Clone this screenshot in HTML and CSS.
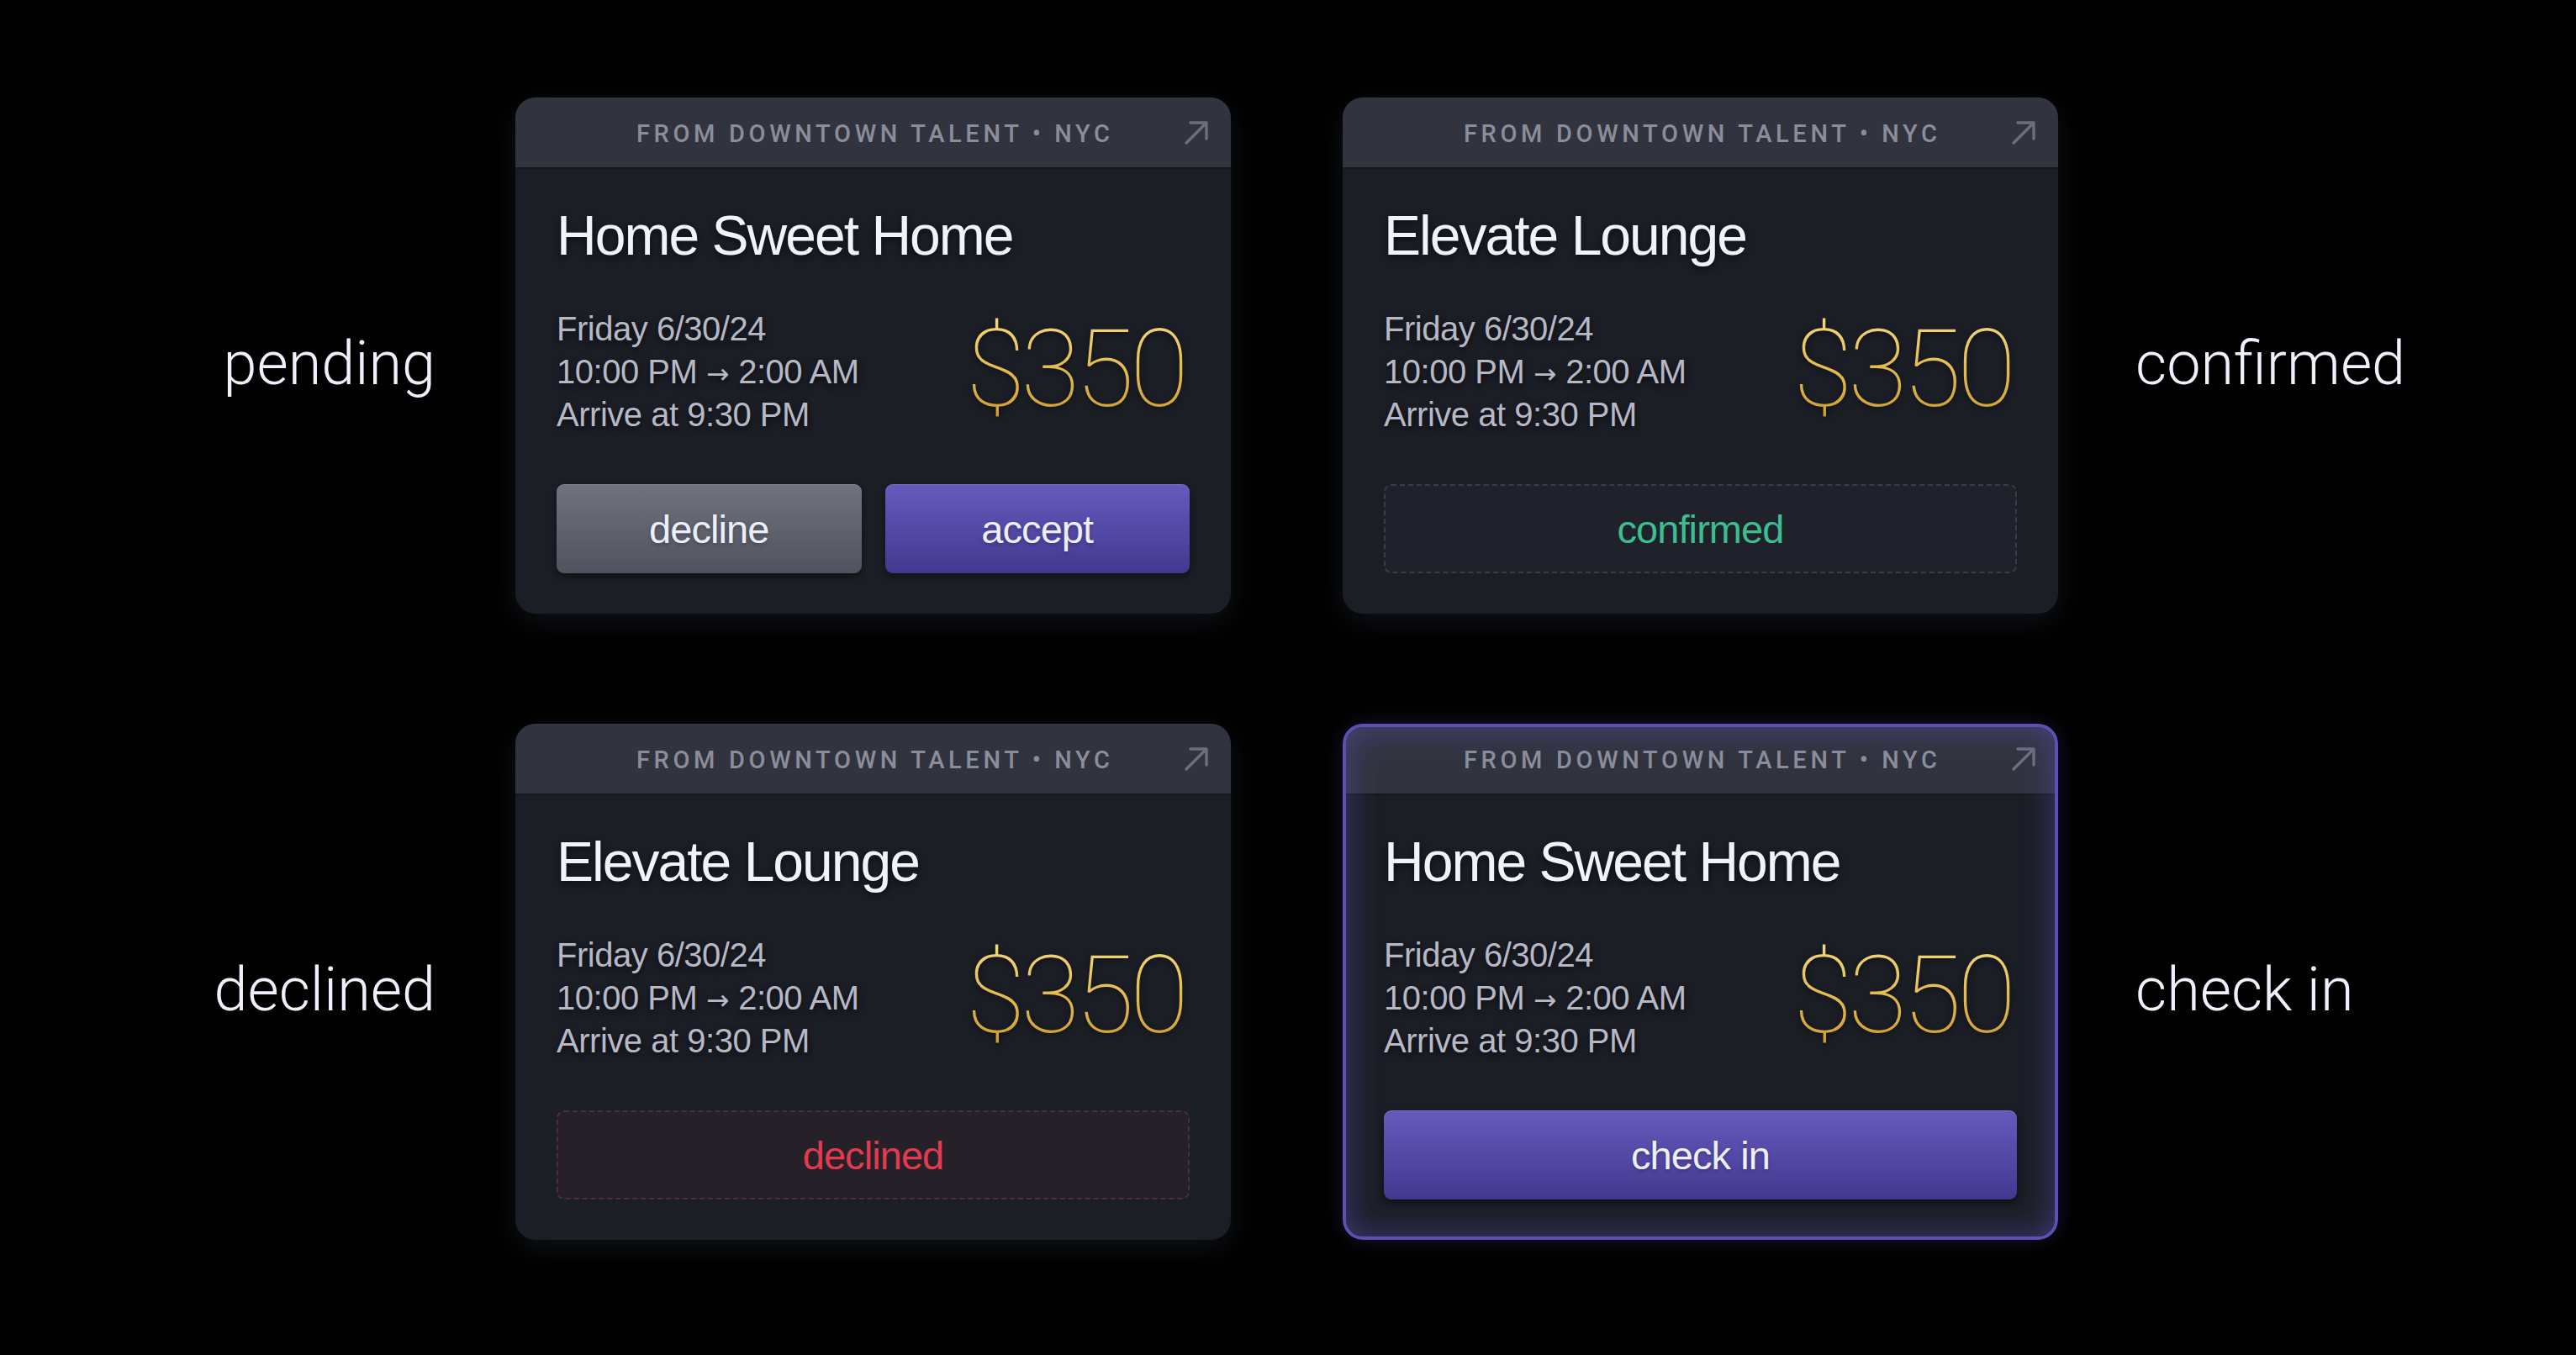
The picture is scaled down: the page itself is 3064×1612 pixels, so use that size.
FILE: index.html
```html
<!DOCTYPE html>
<html lang="en">
<head>
<meta charset="utf-8">
<title>Booking states</title>
<link rel="stylesheet" href="styles.css">
</head>
<body>
<main class="stage">
  <section class="row">
    <div class="label label-left">pending</div>
    <div class="cards">
      <article class="card">
        <header class="card-head">
          <span></span>
          <span class="agency">FROM DOWNTOWN TALENT • NYC</span>
          <svg class="ext" viewBox="0 0 30 30"><path d="M3 27 L27 3 M8 3 H27 V22"/></svg>
        </header>
        <div class="card-body">
          <h2 class="venue">Home Sweet Home</h2>
          <div class="info">
            <div class="when"><div>Friday 6/30/24</div><div>10:00 PM <span class="arr">→</span> 2:00 AM</div><div>Arrive at 9:30 PM</div></div>
            <div class="price">$350</div>
          </div>
          <div class="actions">
            <button class="btn btn-gray">decline</button>
            <button class="btn btn-purple">accept</button>
          </div>
        </div>
      </article>
      <article class="card">
        <header class="card-head">
          <span></span>
          <span class="agency">FROM DOWNTOWN TALENT • NYC</span>
          <svg class="ext" viewBox="0 0 30 30"><path d="M3 27 L27 3 M8 3 H27 V22"/></svg>
        </header>
        <div class="card-body">
          <h2 class="venue">Elevate Lounge</h2>
          <div class="info">
            <div class="when"><div>Friday 6/30/24</div><div>10:00 PM <span class="arr">→</span> 2:00 AM</div><div>Arrive at 9:30 PM</div></div>
            <div class="price">$350</div>
          </div>
          <div class="actions">
            <div class="status status-ok">confirmed</div>
          </div>
        </div>
      </article>
    </div>
    <div class="label label-right">confirmed</div>
  </section>
  <section class="row">
    <div class="label label-left">declined</div>
    <div class="cards">
      <article class="card">
        <header class="card-head">
          <span></span>
          <span class="agency">FROM DOWNTOWN TALENT • NYC</span>
          <svg class="ext" viewBox="0 0 30 30"><path d="M3 27 L27 3 M8 3 H27 V22"/></svg>
        </header>
        <div class="card-body">
          <h2 class="venue">Elevate Lounge</h2>
          <div class="info">
            <div class="when"><div>Friday 6/30/24</div><div>10:00 PM <span class="arr">→</span> 2:00 AM</div><div>Arrive at 9:30 PM</div></div>
            <div class="price">$350</div>
          </div>
          <div class="actions">
            <div class="status status-no">declined</div>
          </div>
        </div>
      </article>
      <article class="card card-active">
        <header class="card-head">
          <span></span>
          <span class="agency">FROM DOWNTOWN TALENT • NYC</span>
          <svg class="ext" viewBox="0 0 30 30"><path d="M3 27 L27 3 M8 3 H27 V22"/></svg>
        </header>
        <div class="card-body">
          <h2 class="venue">Home Sweet Home</h2>
          <div class="info">
            <div class="when"><div>Friday 6/30/24</div><div>10:00 PM <span class="arr">→</span> 2:00 AM</div><div>Arrive at 9:30 PM</div></div>
            <div class="price">$350</div>
          </div>
          <div class="actions">
            <button class="btn btn-purple">check in</button>
          </div>
        </div>
      </article>
    </div>
    <div class="label label-right">check in</div>
  </section>
</main>
</body>
</html>
```
FILE: styles.css
```css
html, body {
  margin: 0;
  padding: 0;
  background: #000;
}
body {
  width: 3064px;
  height: 1612px;
  overflow: hidden;
  font-family: "Liberation Sans", Arial, sans-serif;
}
.stage {
  display: flex;
  flex-direction: column;
  gap: 131px;
  padding-top: 116px;
}
.row {
  display: flex;
  align-items: center;
}
.label {
  font-family: Roboto, "Liberation Sans", sans-serif;
  font-weight: 300;
  font-size: 72px;
  color: #eef0fb;
  padding-top: 18px;
}
.label-left {
  width: 518px;
  margin-right: 95px;
  text-align: right;
}
.label-right {
  margin-left: 92px;
}
.cards {
  display: flex;
  gap: 133px;
}
.card {
  position: relative;
  width: 851px;
  border-radius: 24px;
  background: #1c1e26;
  overflow: hidden;
  box-shadow: 0 10px 36px rgba(40, 44, 58, 0.4);
}
.card-head {
  height: 83px;
  background: #31343f;
  display: grid;
  grid-template-columns: 1fr auto 1fr;
  align-items: center;
  padding: 0 26px;
  box-shadow: 0 2px 0 rgba(0, 0, 0, 0.18);
}
.agency {
  font-family: Roboto, "Liberation Sans", sans-serif;
  font-weight: 500;
  font-size: 29px;
  letter-spacing: 0.16em;
  color: #8b8e9a;
  margin-right: -0.16em;
  padding-top: 2px;
}
.ext {
  justify-self: end;
  width: 30px;
  height: 30px;
  fill: none;
  stroke: #6d707c;
  stroke-width: 3.4;
  stroke-linecap: round;
  stroke-linejoin: round;
}
.card-body {
  padding: 45px 49px 48px;
}
.venue {
  margin: 0;
  font-size: 66px;
  font-weight: 400;
  line-height: 72px;
  letter-spacing: -0.03em;
  color: #f1f2fb;
  text-shadow: 0 3px 8px rgba(0, 0, 0, 0.6);
}
.info {
  display: flex;
  justify-content: space-between;
  align-items: center;
  margin-top: 50px;
}
.when {
  font-size: 40px;
  line-height: 51px;
  color: #b6b8c5;
  letter-spacing: -0.012em;
  text-shadow: 0 3px 8px rgba(0, 0, 0, 0.7);
}
.arr {
  font-family: "DejaVu Sans", sans-serif;
  font-size: 0.82em;
  line-height: 0;
  letter-spacing: 0;
}
.price {
  font-family: Roboto, "Liberation Sans", sans-serif;
  font-weight: 100;
  font-size: 128px;
  line-height: 1;
  letter-spacing: -0.04em;
  margin-right: 6px;
  margin-top: -8px;
  background: linear-gradient(180deg, #f4d97f 0%, #e2b94b 55%, #c99a2e 100%);
  -webkit-background-clip: text;
  background-clip: text;
  color: transparent;
  filter: drop-shadow(0 2px 4px rgba(0, 0, 0, 0.6));
}
.actions {
  display: flex;
  gap: 28px;
  margin-top: 57px;
  height: 106px;
}
.btn {
  flex: 1;
  border: 0;
  border-radius: 9px;
  font-family: inherit;
  font-size: 47px;
  letter-spacing: -0.02em;
  color: #eceefa;
  box-shadow: 0 4px 10px rgba(0, 0, 0, 0.45), inset 0 1px 0 rgba(255, 255, 255, 0.15);
  text-shadow: 0 2px 4px rgba(0, 0, 0, 0.25);
}
.btn-gray {
  background: linear-gradient(180deg, #70737e 0%, #50525e 100%);
}
.btn-purple {
  background: linear-gradient(180deg, #665abd 0%, #43388f 100%);
}
.status {
  flex: 1;
  display: flex;
  align-items: center;
  justify-content: center;
  border: 2px dashed;
  border-radius: 9px;
  font-size: 47px;
  letter-spacing: -0.02em;
}
.status-ok {
  border-color: #393d48;
  background: #1f222b;
  color: #3ebd8e;
}
.status-no {
  border-color: #4b3038;
  background: #262029;
  color: #e23b4f;
}
.card-active {
  box-shadow: 0 0 26px rgba(91, 80, 182, 0.25);
}
.card-active::after {
  content: "";
  position: absolute;
  inset: 0;
  border-radius: 24px;
  border: 4px solid #5b50b6;
  box-shadow: inset 0 0 38px rgba(91, 80, 182, 0.55);
  pointer-events: none;
}
```
